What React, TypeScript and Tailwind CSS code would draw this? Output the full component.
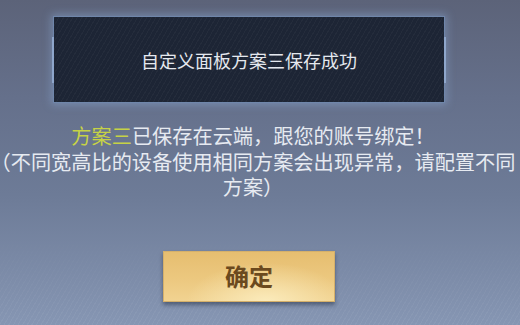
import React from "react";

export default function App() {
  return (
    <div
      className="relative w-[520px] h-[325px] overflow-hidden flex flex-col items-center pr-[22px] bg-[linear-gradient(180deg,#5c6379_0%,#65708b_30%,#6d7b97_60%,#8696b3_100%)]"
      style={{ fontFamily: '"Noto Sans CJK SC", "Noto Sans", sans-serif' }}
    >
      {/* diagonal stripes overlay near bottom */}
      <div className="pointer-events-none absolute inset-x-0 bottom-0 h-[90px] opacity-40 bg-[repeating-linear-gradient(120deg,rgba(255,255,255,0.12)_0px,rgba(255,255,255,0.12)_1px,transparent_1px,transparent_4px)] [mask-image:linear-gradient(180deg,transparent,black)]" />

      {/* top panel */}
      <div className="relative mt-[16px] w-[392px] h-[87px] shrink-0 flex items-center justify-center border border-[#6f86aa] bg-[#1d2535] shadow-[0_0_8px_2px_rgba(140,170,215,0.45)]">
        <div className="pointer-events-none absolute inset-0 opacity-60 bg-[repeating-linear-gradient(120deg,rgba(255,255,255,0.05)_0px,rgba(255,255,255,0.05)_1px,transparent_1px,transparent_4px)]" />
        <div className="absolute left-[-2px] top-[20px] h-[46px] w-[2px] bg-[#8ea6cb]" />
        <div className="absolute right-[-2px] top-[20px] h-[46px] w-[2px] bg-[#8ea6cb]" />
        <span className="relative text-[18px] leading-none text-[#e4e8ee]">
          自定义面板方案三保存成功
        </span>
      </div>

      {/* message */}
      <div className="relative self-start ml-[-12px] mt-[20px] w-[530px] shrink-0 text-center text-[20.2px] leading-[25.5px] text-[#e6eaf1]">
        <span className="text-[#c6d246]">方案三</span>已保存在云端，跟您的账号绑定！
        <br />
        （不同宽高比的设备使用相同方案会出现异常，请配置不同方案）
      </div>

      {/* button */}
      <div className="relative mt-[51px] w-[172px] h-[51px] shrink-0 flex items-center justify-center border border-[#d5b06a] bg-[linear-gradient(180deg,#e6be70_0%,#ecc87f_55%,#f1d391_100%)] shadow-[0_3px_4px_rgba(20,30,50,0.45)]">
        <div className="pointer-events-none absolute inset-0 bg-[radial-gradient(ellipse_at_60%_100%,rgba(255,245,205,0.7)_0%,rgba(255,245,205,0)_55%)]" />
        <span className="relative text-[24px] leading-none font-semibold text-[#6b4a1e]">确定</span>
      </div>
    </div>
  );
}
